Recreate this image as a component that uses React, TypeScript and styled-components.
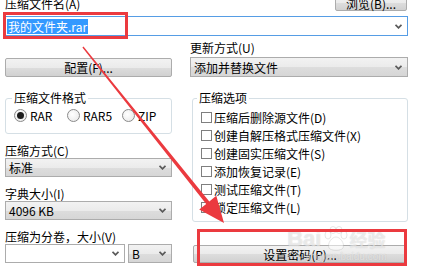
import styled, { createGlobalStyle } from 'styled-components';

const GlobalStyle = createGlobalStyle`
  html, body {
    margin: 0;
    padding: 0;
    background: #fff;
  }
  body {
    font-family: "Noto Sans CJK SC", "Noto Sans", sans-serif;
    font-size: 12px;
    color: #000;
  }
`;

const Window = styled.div`
  position: relative;
  width: 423px;
  height: 276px;
  overflow: hidden;
  box-sizing: border-box;
  padding: 0 15px 0 5px;
  background: #fff;
`;

const TopRow = styled.div`
  display: flex;
  justify-content: space-between;
  align-items: flex-end;
  height: 16px;
  margin-top: -5px;
`;

const Label = styled.div<{ $top?: number }>`
  height: 14px;
  line-height: 14px;
  white-space: nowrap;
  margin-top: ${(p) => p.$top ?? 0}px;
`;

const Button = styled.button<{ $height?: number }>`
  display: flex;
  align-items: center;
  justify-content: center;
  box-sizing: border-box;
  width: 100%;
  height: ${(p) => p.$height ?? 19}px;
  padding: 0;
  border: 1px solid #acacac;
  border-radius: 2px;
  background: linear-gradient(#f2f2f2, #ebebeb 50%, #dddddd 51%, #d1d1d1);
  font: inherit;
  color: #000;
  white-space: nowrap;
`;

const BrowseButton = styled(Button)`
  width: 72px;
  margin-right: 1px;
`;

const ConfigButton = styled(Button)`
  margin-top: 22px;
`;

const PasswordButton = styled(Button)`
  margin: 23px 1px 0 3px;
  width: auto;
`;

const FileCombo = styled.div`
  display: flex;
  align-items: center;
  justify-content: space-between;
  box-sizing: border-box;
  height: 20px;
  margin-top: 5px;
  padding: 0 5px 0 1px;
  border: 1px solid #569de5;
  background: #fff;
`;

const Selected = styled.span`
  background: #3399ff;
  color: #fff;
  line-height: 15px;
  padding: 0 1px;
`;

const Select = styled.div<{ $white?: boolean; $height?: number; $top?: number }>`
  display: flex;
  align-items: center;
  justify-content: space-between;
  box-sizing: border-box;
  height: ${(p) => p.$height ?? 19}px;
  margin-top: ${(p) => p.$top ?? 0}px;
  padding: 0 5px 0 3px;
  border: 1px solid #acacac;
  background: ${(p) => (p.$white ? '#fff' : 'linear-gradient(#f2f2f2, #ebebeb 50%, #dddddd 51%, #d6d6d6)')};
  white-space: nowrap;
`;

const Columns = styled.div`
  display: grid;
  grid-template-columns: 167px 218px;
  column-gap: 18px;
`;

const Column = styled.div`
  display: flex;
  flex-direction: column;
`;

const Group = styled.fieldset<{ $left?: number }>`
  margin: 15px 0 0 ${(p) => p.$left ?? 0}px;
  padding: 0;
  min-width: 0;
  border: 1px solid #d5dfe5;
  border-radius: 3px;
`;

const Legend = styled.legend<{ $inset: number }>`
  margin-left: ${(p) => p.$inset}px;
  padding: 0 2px;
  font-size: 12px;
  line-height: 12px;
  height: 12px;
`;

const RadioRow = styled.div`
  display: grid;
  grid-template-columns: 53px 55px auto;
  align-items: center;
  height: 18px;
  padding: 2px 0 9px 8px;
`;

const Option = styled.div`
  display: flex;
  align-items: center;
  gap: 3px;
  height: 18px;
  white-space: nowrap;
`;

const Radio = styled.span<{ $checked?: boolean }>`
  position: relative;
  box-sizing: border-box;
  width: 13px;
  height: 13px;
  border: 1px solid #8a8a8a;
  border-radius: 50%;
  background: radial-gradient(circle at 40% 40%, #fff, #e6e6e6);
  &::after {
    content: '';
    position: absolute;
    left: 2px;
    top: 2px;
    width: 7px;
    height: 7px;
    border-radius: 50%;
    background: #1c1c1c;
    display: ${(p) => (p.$checked ? 'block' : 'none')};
  }
`;

const CheckList = styled.div`
  display: flex;
  flex-direction: column;
  padding: 4px 0 5px 8px;
`;

const Check = styled.span`
  box-sizing: border-box;
  width: 11px;
  height: 11px;
  margin-right: -1px;
  border: 1px solid #7f7f7f;
  background: #fff;
`;

const VolumeRow = styled.div`
  display: grid;
  grid-template-columns: 120px 44px;
  column-gap: 3px;
`;

const Overlay = styled.div`
  position: absolute;
  inset: 0;
  pointer-events: none;
`;

const Mark = styled.div<{ $x: number; $y: number; $w: number; $h: number }>`
  position: absolute;
  left: ${(p) => p.$x}px;
  top: ${(p) => p.$y}px;
  width: ${(p) => p.$w}px;
  height: ${(p) => p.$h}px;
  box-sizing: border-box;
  border: 3px solid #eb3a3f;
`;

const Watermark = styled.div`
  position: absolute;
  left: 286px;
  top: 226px;
  display: flex;
  flex-direction: column;
  align-items: center;
  color: rgba(255, 255, 255, 0.5);
  text-shadow: 0 0 1px rgba(140, 140, 140, 0.22), 0 0 1px rgba(140, 140, 140, 0.22);
  font-family: "Liberation Sans", sans-serif;
`;

const WatermarkLogo = styled.div`
  display: flex;
  align-items: center;
  font-size: 22px;
  font-weight: bold;
  line-height: 26px;
  gap: 1px;
`;

const WatermarkCjk = styled.span`
  font-family: "Noto Sans CJK SC", sans-serif;
  font-size: 18px;
  font-weight: bold;
`;

const WatermarkUrl = styled.div`
  font-size: 10px;
  line-height: 10px;
  margin-left: 20px;
`;

function Chevron() {
  return (
    <svg width="7" height="5" viewBox="0 0 7 5">
      <path d="M0.5 0.8 L3.5 3.8 L6.5 0.8" fill="none" stroke="#5a5a5a" strokeWidth="1.8" />
    </svg>
  );
}

function Paw() {
  return (
    <svg width="26" height="26" viewBox="0 0 26 26">
      <g fill="rgba(255,255,255,0.5)" stroke="rgba(140,140,140,0.22)" strokeWidth="1">
        <ellipse cx="6" cy="9" rx="3" ry="4" />
        <ellipse cx="11" cy="4" rx="3" ry="3.5" />
        <ellipse cx="17" cy="4" rx="3" ry="3.5" />
        <ellipse cx="22" cy="9" rx="3" ry="4" />
        <path d="M7 22 C5 17 10 11 14 11 C18 11 23 17 21 22 C19 25 9 25 7 22 Z" />
      </g>
    </svg>
  );
}

const options = [
  '压缩后删除源文件(D)',
  '创建自解压格式压缩文件(X)',
  '创建固实压缩文件(S)',
  '添加恢复记录(E)',
  '测试压缩文件(T)',
  '锁定压缩文件(L)'
];

export default function App() {
  return (
    <Window>
      <GlobalStyle />
      <TopRow>
        <Label>压缩文件名(A)</Label>
        <BrowseButton $height={16}>浏览(B)...</BrowseButton>
      </TopRow>
      <FileCombo>
        <Selected>我的文件夹.rar</Selected>
        <Chevron />
      </FileCombo>

      <Columns>
        <Column>
          <ConfigButton>配置(F)...</ConfigButton>
          <Group>
            <Legend $inset={6}>压缩文件格式</Legend>
            <RadioRow>
              <Option>
                <Radio $checked />
                RAR
              </Option>
              <Option>
                <Radio />
                RAR5
              </Option>
              <Option>
                <Radio />
                ZIP
              </Option>
            </RadioRow>
          </Group>

          <Label $top={10}>压缩方式(C)</Label>
          <Select>
            标准
            <Chevron />
          </Select>

          <Label $top={10}>字典大小(I)</Label>
          <Select>
            4096 KB
            <Chevron />
          </Select>

          <Label $top={10}>压缩为分卷，大小(V)</Label>
          <VolumeRow>
            <Select $white>
              <span />
              <Chevron />
            </Select>
            <Select>
              B
              <Chevron />
            </Select>
          </VolumeRow>
        </Column>

        <Column>
          <Label $top={5}>更新方式(U)</Label>
          <Select $height={20} $top={2}>
            添加并替换文件
            <Chevron />
          </Select>
          <Group $left={2}>
            <Legend $inset={4}>压缩选项</Legend>
            <CheckList>
              {options.map((text) => (
                <Option key={text}>
                  <Check />
                  {text}
                </Option>
              ))}
            </CheckList>
          </Group>
          <PasswordButton $height={18}>设置密码(P)...</PasswordButton>
        </Column>
      </Columns>

      <Overlay>
        <Watermark>
          <WatermarkLogo>
            Bai
            <Paw />
            <WatermarkCjk>经验</WatermarkCjk>
          </WatermarkLogo>
          <WatermarkUrl>jingyan.baidu.com</WatermarkUrl>
        </Watermark>
        <Mark $x={3} $y={12} $w={125} $h={27} />
        <Mark $x={197} $y={229} $w={210} $h={37} />
        <svg width="423" height="276" style={{ position: 'absolute', left: 0, top: 0 }}>
          <polygon
            fill="#eb3a3f"
            points="83.5,46.5 209.3,201.4 216.3,195.8 224,223 199.2,209.6 206.2,204 82.4,47.4"
          />
        </svg>
      </Overlay>
    </Window>
  );
}
